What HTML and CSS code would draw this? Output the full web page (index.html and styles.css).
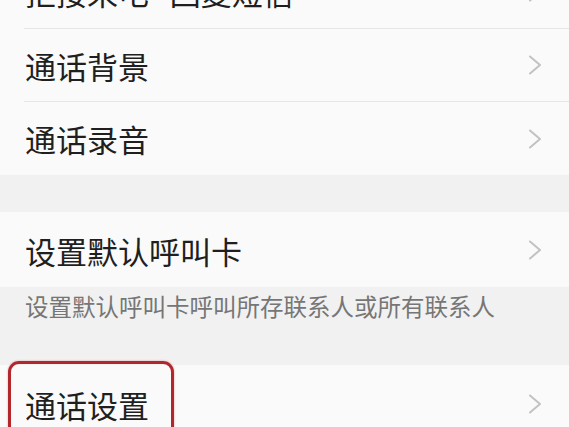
FILE: index.html
```html
<!DOCTYPE html>
<html lang="zh-CN">
<head>
<meta charset="utf-8">
<title>通话设置</title>
<link rel="stylesheet" href="styles.css">
</head>
<body>
<div class="page">
  <section class="group first-group">
    <div class="row"><div class="row-inner"><span class="label">拒接来电<span class="dot">·</span>回复短信</span><span class="chev"><svg viewBox="0 0 14 20" width="14" height="20"><path d="M2 1.5 L12 10 L2 18.5" /></svg></span></div></div>
    <div class="row"><div class="row-inner"><span class="label">通话背景</span><span class="chev"><svg viewBox="0 0 14 20" width="14" height="20"><path d="M2 1.5 L12 10 L2 18.5" /></svg></span></div></div>
    <div class="row"><div class="row-inner no-line"><span class="label">通话录音</span><span class="chev"><svg viewBox="0 0 14 20" width="14" height="20"><path d="M2 1.5 L12 10 L2 18.5" /></svg></span></div></div>
  </section>
  <div class="gap"></div>
  <section class="group">
    <div class="row row-tall"><div class="row-inner no-line"><span class="label">设置默认呼叫卡</span><span class="chev"><svg viewBox="0 0 14 20" width="14" height="20"><path d="M2 1.5 L12 10 L2 18.5" /></svg></span></div></div>
  </section>
  <div class="note">设置默认呼叫卡呼叫所存联系人或所有联系人</div>
  <section class="group">
    <div class="row row-last"><div class="row-inner no-line"><span class="label">通话设置</span><span class="chev"><svg viewBox="0 0 14 20" width="14" height="20"><path d="M2 1.5 L12 10 L2 18.5" /></svg></span></div><div class="highlight"></div></div>
  </section>
</div>
</body>
</html>
```
FILE: styles.css
```css
html, body {
  margin: 0;
  padding: 0;
}
body {
  background: #f1f1f1;
  font-family: "Noto Sans CJK SC", "Noto Sans", sans-serif;
  color: #1f1f1f;
  overflow: hidden;
}
.page {
  width: 569px;
}
.first-group {
  margin-top: -44px;
}
.group {
  background: #fafafa;
}
.row {
  position: relative;
  padding-left: 24px;
}
.row-inner {
  display: flex;
  align-items: center;
  justify-content: space-between;
  height: 72px;
  border-bottom: 1px solid #e6e6e6;
  padding-left: 1px;
  padding-right: 27px;
}
.row-inner.no-line {
  border-bottom: none;
  height: 73px;
}
.row-tall .row-inner {
  height: 75px;
  padding-top: 1px;
  box-sizing: border-box;
}
.row-last .row-inner {
  height: 78px;
}
.label {
  font-size: 31px;
  line-height: 1;
  letter-spacing: 0;
}
.dot {
  font-family: "Noto Sans", sans-serif;
  font-weight: 700;
  padding: 0 6px;
}
.chev {
  display: flex;
  width: 14px;
  height: 20px;
}
.chev svg path {
  fill: none;
  stroke: #c2c2c2;
  stroke-width: 2;
  stroke-linecap: round;
  stroke-linejoin: round;
}
.gap {
  height: 37px;
  background: #f1f1f1;
}
.note {
  height: 78px;
  box-sizing: border-box;
  padding: 4px 0 0 25px;
  font-size: 23.5px;
  line-height: 30px;
  color: #767676;
  background: #f1f1f1;
}
.highlight {
  position: absolute;
  left: 8px;
  top: -4px;
  width: 166px;
  height: 90px;
  box-sizing: border-box;
  border: 3px solid #b3262c;
  border-radius: 11px;
  box-shadow: 0 0 2px rgba(179, 38, 44, 0.45);
}
```
